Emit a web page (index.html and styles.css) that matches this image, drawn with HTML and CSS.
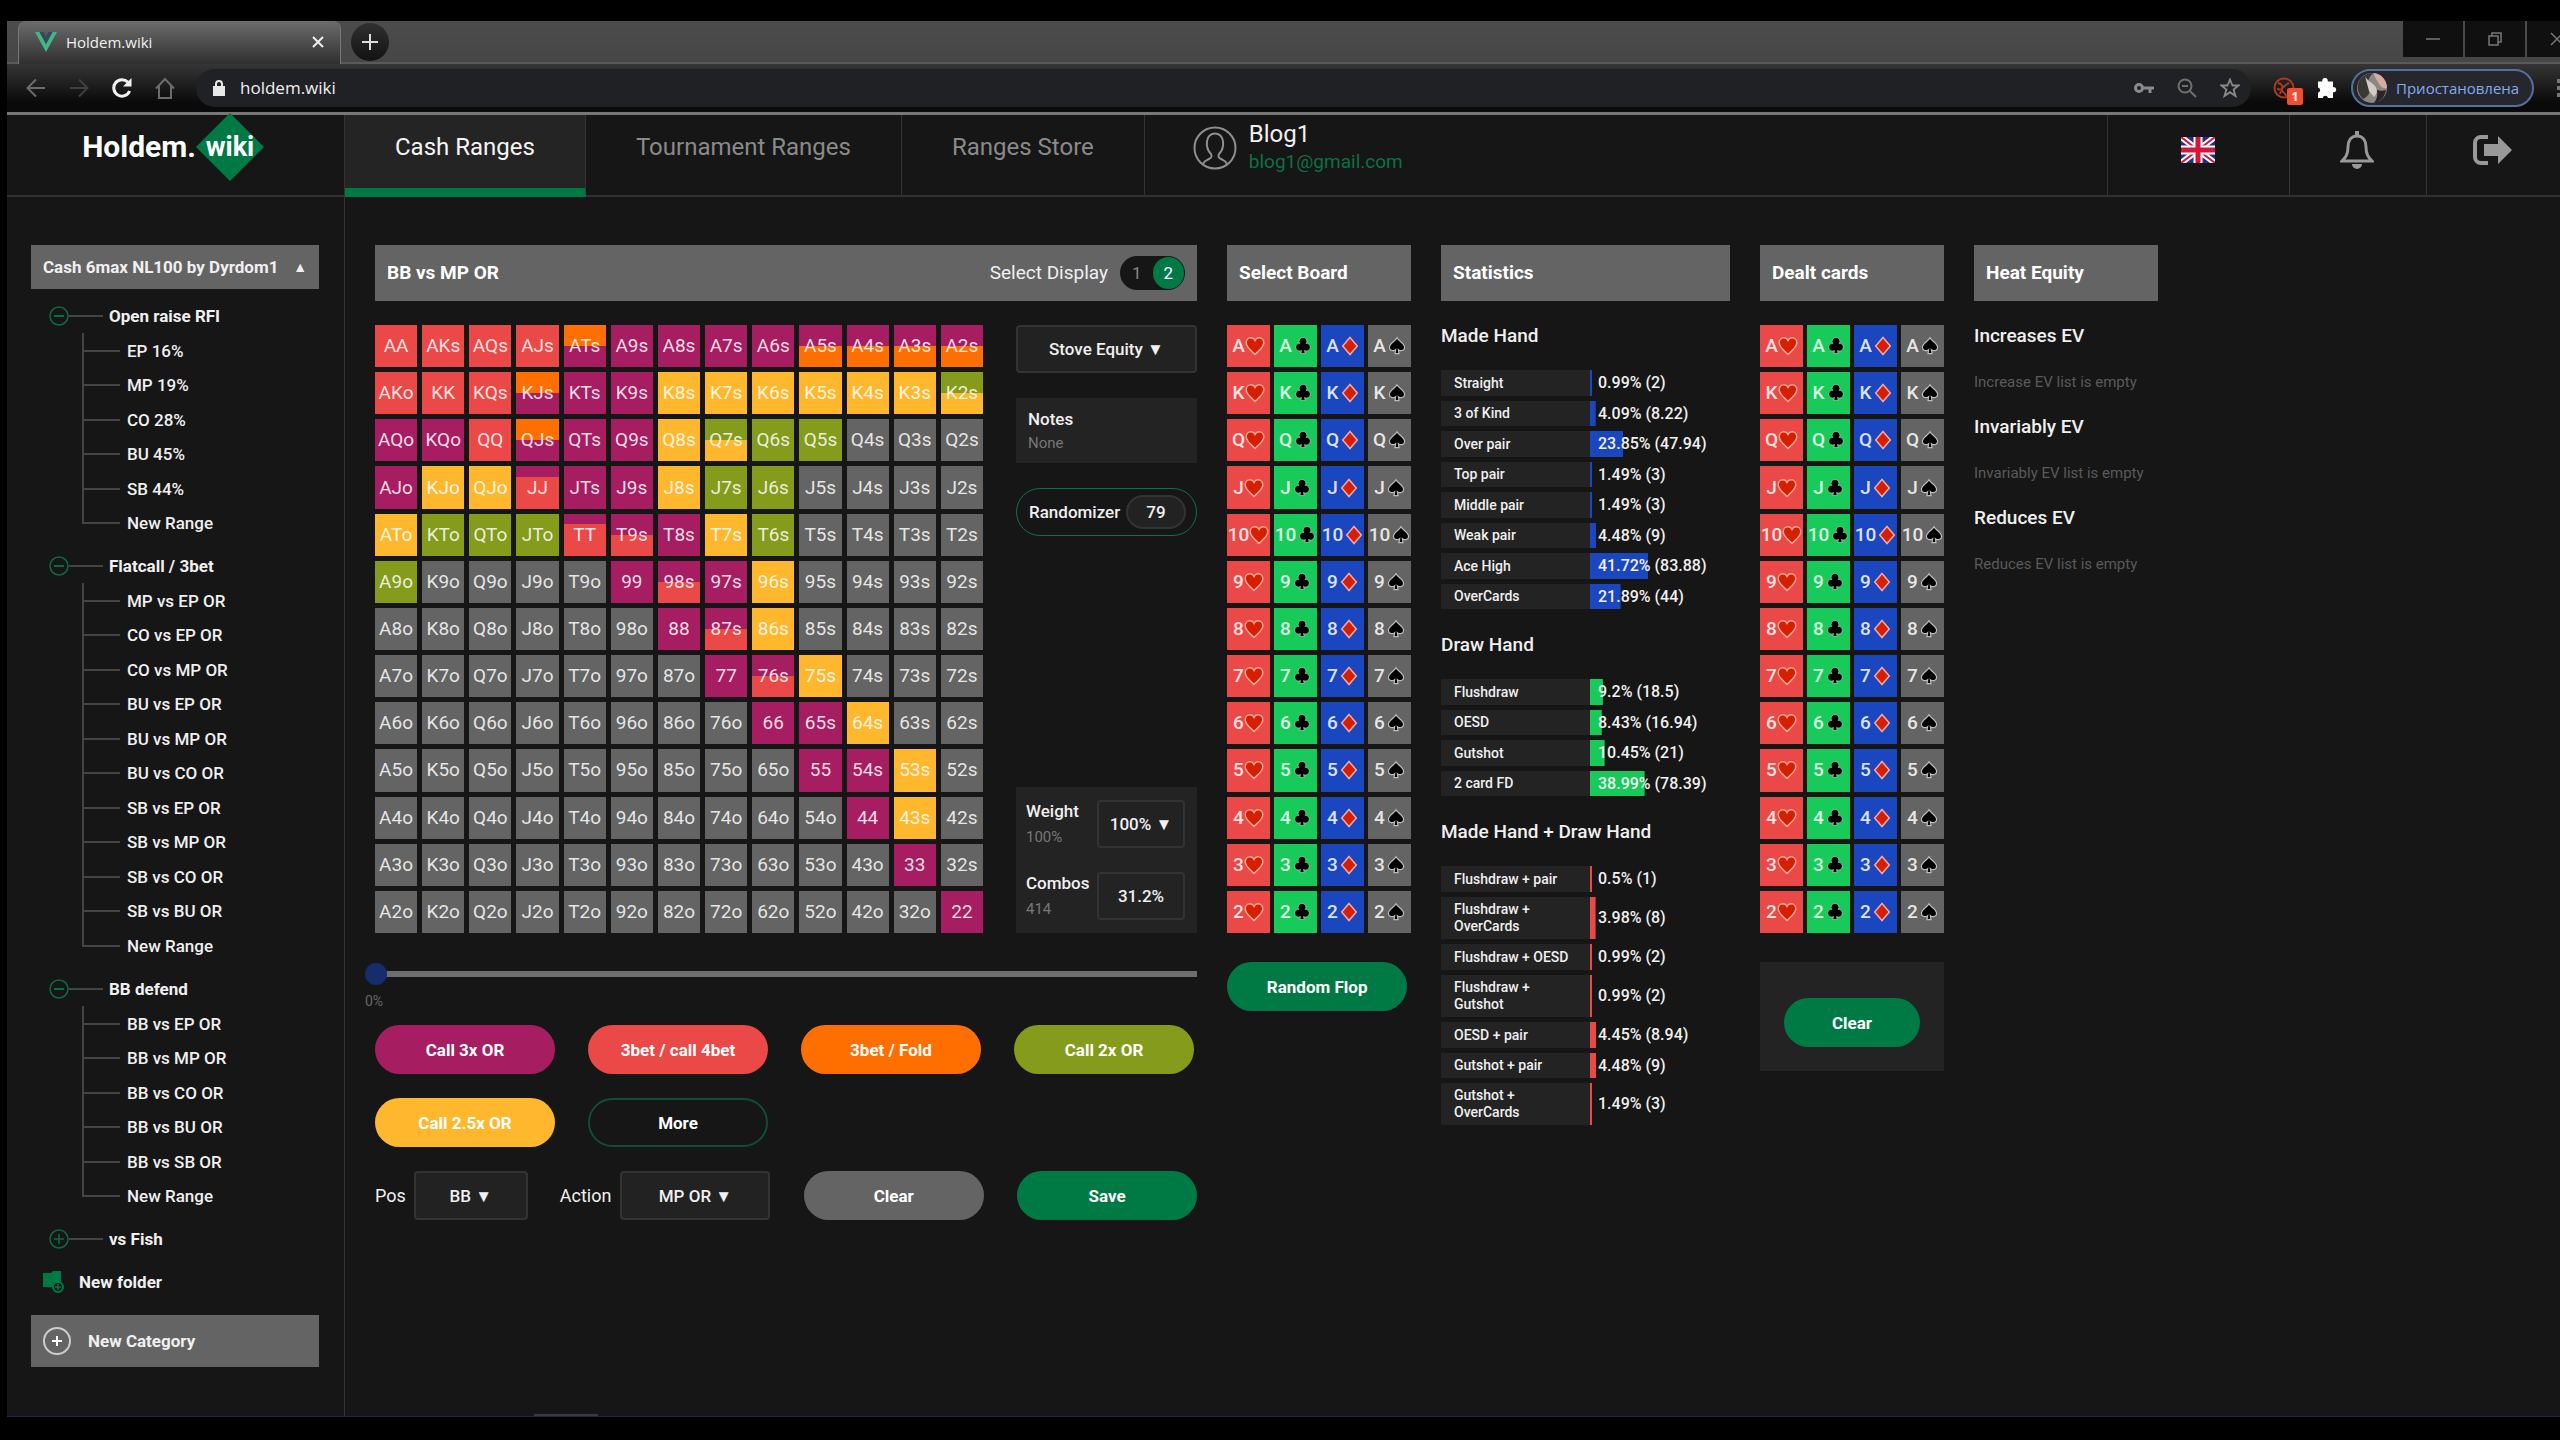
FILE: index.html
```html
<!DOCTYPE html>
<html lang="en">
<head>
<meta charset="utf-8">
<title>Holdem.wiki</title>
<link rel="stylesheet" href="styles.css">
</head>
<body>
<svg class="defs" aria-hidden="true">
  <symbol id="heart" viewBox="0 0 20 20"><path d="M10 18.4C7 15.4 1.2 11.600 1.200 6.800C1.200 3.800 3.400 1.800 5.800 1.800C7.800 1.800 9.200 2.900 10 4.500C10.800 2.900 12.200 1.800 14.200 1.800C16.600 1.800 18.800 3.800 18.800 6.800C18.800 11.600 13 15.400 10 18.400Z" fill="#d61f00" stroke="#ffa596" stroke-width="1.500"/></symbol>
  <symbol id="club" viewBox="0 0 20 20"><path d="M11 1.500a3.600 3.600 0 0 1 3 5.900a3.800 3.800 0 1 1-1.500 7l.6 3.100H8.900l.6-3.100a3.800 3.800 0 1 1-1.500-7a3.600 3.600 0 0 1 3-5.900Z" fill="#000" stroke="#ffffff70" stroke-width="1"/></symbol>
  <symbol id="diamond" viewBox="0 0 20 20"><path d="M11 1.500L18.300 10L11 18.500L3.700 10Z" fill="#d61f00" stroke="#f5a9a5" stroke-width="1.500"/></symbol>
  <symbol id="spade" viewBox="0 0 20 20"><path d="M11 1.800C12.600 5 18.600 7.600 18.600 11.400C18.600 14.600 14.600 15.600 12.400 13.700L13 17.600H9L9.600 13.700C7.400 15.600 3.400 14.600 3.400 11.400C3.400 7.600 9.400 5 11 1.800Z" fill="#000" stroke="#bdbdbd" stroke-width="1.200"/></symbol>
  <symbol id="minus" viewBox="0 0 20 20"><circle cx="10" cy="10" r="9" fill="none" stroke="currentColor" stroke-width="1.500"/><path d="M5 10h10" stroke="currentColor" stroke-width="2"/></symbol>
  <symbol id="plus" viewBox="0 0 20 20"><circle cx="10" cy="10" r="9" fill="none" stroke="currentColor" stroke-width="1.500"/><path d="M5 10h10M10 5v10" stroke="currentColor" stroke-width="1.500"/></symbol>
</svg>

<div class="window">
  <div class="tabstrip">
    <div class="tab">
      <svg width="22" height="20" viewBox="0 0 22 20"><path d="M0 0h4.500L11 12L17.500 0H22L11 20Z" fill="#41b883"/><path d="M4.500 0h4L11 4.500L13.500 0h4L11 12Z" fill="#35495e"/></svg>
      <span class="tab-title">Holdem.wiki</span>
      <button class="tab-close" aria-label="Close tab"><svg width="12" height="12" viewBox="0 0 12 12"><path d="M1 1l10 10M11 1L1 11" stroke="#eee" stroke-width="2"/></svg></button>
    </div>
    <button class="tab-new" aria-label="New tab"><svg width="16" height="16" viewBox="0 0 16 16"><path d="M8 0v16M0 8h16" stroke="#ddd" stroke-width="2"/></svg></button>
    <div class="win-buttons">
      <button aria-label="Minimize"><svg width="14" height="14" viewBox="0 0 14 14"><path d="M0 7h14" stroke="#777" stroke-width="1.500"/></svg></button>
      <button aria-label="Restore"><svg width="14" height="14" viewBox="0 0 14 14" fill="none" stroke="#777" stroke-width="1.500"><path d="M1 4h9v9H1ZM4 4V1h9v9h-3"/></svg></button>
      <button aria-label="Close"><svg width="14" height="14" viewBox="0 0 14 14"><path d="M1 1l12 12M13 1L1 13" stroke="#777" stroke-width="1.500"/></svg></button>
    </div>
  </div>
  <div class="toolbar">
    <div class="nav-buttons">
      <button aria-label="Back"><svg width="20" height="20" viewBox="0 0 20 20" fill="none" stroke="#6c6c6c" stroke-width="2"><path d="M19 10H2M10 1.500L1.500 10L10 18.500"/></svg></button>
      <button aria-label="Forward"><svg width="20" height="20" viewBox="0 0 20 20" fill="none" stroke="#404040" stroke-width="2"><path d="M1 10h17M10 1.500L18.500 10L10 18.500"/></svg></button>
      <button aria-label="Reload"><svg width="20" height="20" viewBox="0 0 20 20" fill="none" stroke="#f1f1f1" stroke-width="3"><path d="M17.600 13A8.200 8.200 0 1 1 16 4.300"/><path d="M19.500 0v8.500H11Z" fill="#f1f1f1" stroke="none"/></svg></button>
      <button aria-label="Home"><svg width="20" height="22" viewBox="0 0 20 22" fill="none" stroke="#6c6c6c" stroke-width="2"><path d="M1 11.500L10 2l9 9.500M4 9v12h12V9"/></svg></button>
    </div>
    <div class="address">
      <svg width="12" height="16" viewBox="0 0 12 16"><path d="M0 6h12v10H0Z" fill="#e8e8e8"/><path d="M3 7V4a3 3 0 0 1 6 0v3" fill="none" stroke="#e8e8e8" stroke-width="2"/></svg>
      <input class="address-input" type="text" aria-label="Address" value="holdem.wiki">
      <svg width="20" height="12" viewBox="0 0 20 12" fill="none" stroke="#8a8a8a"><circle cx="5" cy="6" r="3.500" stroke-width="3"/><path d="M9 6h11M16 6v5" stroke-width="3"/></svg>
      <svg width="20" height="20" viewBox="0 0 20 20" fill="none" stroke="#707070" stroke-width="2"><circle cx="8" cy="8" r="6.500"/><path d="M13 13l6 6M5 8h6"/></svg>
      <svg width="20" height="20" viewBox="0 0 20 20" fill="none" stroke="#8a8a8a" stroke-width="1.800"><path d="M10 1.500l2.500 6h6L13.600 11.500l1.900 6.500L10 14.200L4.500 18l1.900-6.500L1.500 7.500h6Z"/></svg>
    </div>
    <div class="extensions">
      <button class="blocker" aria-label="Blocker"><svg width="22" height="22" viewBox="0 0 22 22" fill="none" stroke="#a83a22" stroke-width="2"><circle cx="11" cy="11" r="9.500"/><path d="M5 6c4 1 5 3 4 6s3 3 4 7M7 17c1-6 5-9 9-11M4 12l6 1"/></svg><span class="badge">1</span></button>
      <button aria-label="Extensions"><svg width="20" height="20" viewBox="0 0 20 20"><path d="M8 0a2.600 2.600 0 0 1 2.600 3.500H16V9a2.700 2.700 0 1 1 0 5.300V20h-5a2.700 2.700 0 0 0-5.300 0H1v-5.300a2.700 2.700 0 0 0 0-5.300V3.500h4.400A2.600 2.600 0 0 1 8 0Z" fill="#fff"/></svg></button>
      <button class="profile">
        <svg width="30" height="30" viewBox="0 0 30 30"><circle cx="15" cy="15" r="15" fill="#8d8783"/><path d="M1 11C3 4 9 0 16 0c-5 5-6 10-4 15s-2 9-6 11C2 22 0 17 1 11Z" fill="#3b3735"/><path d="M8 3c2 5 7 6 10 10s2 8-1 11l-5-6Z" fill="#d2ccc7"/><path d="M17 0c8 1 13 8 13 15c-4 1-7-2-9-6S17 4 17 0Z" fill="#d9aba0"/><path d="M20 17c3 1 6 1 9 0c-1 7-6 12-12 13c3-4 4-8 3-13Z" fill="#292625"/></svg>
        <span>Приостановлена</span>
      </button>
      <button class="dots" aria-label="Menu"><svg width="4" height="18" viewBox="0 0 4 18"><path d="M0 0h4v4H0ZM0 7h4v4H0ZM0 14h4v4H0Z" fill="#777"/></svg></button>
    </div>
  </div>

  <header class="header">
    <a class="logo" href="#"><span>Holdem.</span><span class="logo-mark"><svg width="68" height="68" viewBox="0 0 68 68"><path d="M34 0L68 34L34 68L0 34Z" fill="#007a45"/></svg><span class="logo-wiki">wiki</span></span></a>
    <nav class="menu">
      <a class="active" href="#">Cash Ranges</a>
      <a href="#">Tournament Ranges</a>
      <a href="#">Ranges Store</a>
    </nav>
    <div class="user">
      <svg width="44" height="44" viewBox="0 0 44 44" fill="none" stroke="#8f8f8f" stroke-width="2"><circle cx="22" cy="22" r="20.500"/><path d="M10 38c1-3 3-3.500 6-5s3-3 2-5c-4-4-4.500-9-4-13c.5-4.500 4-7.500 8-7.500s7.500 3 8 7.500c.5 4 0 9-4 13c-1 2-1 3.500 2 5s5 2 6 5"/></svg>
      <div><div class="user-name">Blog1</div><a class="user-mail" href="#">blog1@gmail.com</a></div>
    </div>
    <button class="head-btn lang" aria-label="English"><svg width="34" height="26" viewBox="0 0 34 26"><path d="M0 0h34v26H0Z" fill="#23307c"/><path d="M0 0L34 26M34 0L0 26" stroke="#fff" stroke-width="6"/><path d="M0 0L34 26M34 0L0 26" stroke="#d5153a" stroke-width="2"/><path d="M17 0v26M0 13h34" stroke="#fff" stroke-width="9"/><path d="M17 0v26M0 13h34" stroke="#d5153a" stroke-width="5"/></svg></button>
    <button class="head-btn bell" aria-label="Notifications"><svg width="34" height="38" viewBox="0 0 34 38"><path d="M17 5c-6 0-9 5-9 11c0 7-2 10-6 14h30c-4-4-6-7-6-14c0-6-3-11-9-11Z" fill="none" stroke="#999" stroke-width="3"/><path d="M15 0h4v6h-4ZM12 33h10a5 5 0 0 1-10 0Z" fill="#999"/></svg></button>
    <button class="head-btn exit" aria-label="Log out"><svg width="40" height="30" viewBox="0 0 40 30"><path d="M15 2H8a6 6 0 0 0-6 6v14a6 6 0 0 0 6 6h7" fill="none" stroke="#999" stroke-width="4"/><path d="M11 9h14V1L39 15L25 29V21H11Z" fill="#999"/></svg></button>
  </header>

  <div class="body">
    <aside class="sidebar">
      <button class="category"><span>Cash 6max NL100 by Dyrdom1</span><span class="tri">▲</span></button>
      <div class="tree" id="tree"></div>
      <a class="new-folder" href="#"><svg width="22" height="22" viewBox="0 0 22 22"><path d="M0 2h8l2-2h8v16H0Z" fill="#007a45"/><circle cx="15" cy="16" r="5" fill="#161616" stroke="#007a45" stroke-width="2"/><path d="M12 16h6M15 13v6" stroke="#007a45" stroke-width="1.500"/></svg>New folder</a>
      <button class="new-category"><svg width="28" height="28" viewBox="0 0 28 28"><circle cx="14" cy="14" r="13" fill="none" stroke="#ccc" stroke-width="2"/><path d="M9 14h10M14 9v10" stroke="#fff" stroke-width="2"/></svg>New Category</button>
    </aside>

    <main class="main">
      <section>
        <div class="panel-head"><h2>BB vs MP OR</h2>
          <fieldset class="display"><legend class="hidden">Display</legend><span>Select Display</span>
            <span class="switch"><label><input type="radio" name="display">1</label><label><input type="radio" name="display" checked>2</label></span>
          </fieldset>
        </div>
        <div class="range">
          <div class="matrix" id="matrix"></div>
          <div class="side">
            <select class="select" aria-label="Mode"><option>Stove Equity ▼</option></select>
            <div class="notes"><strong>Notes</strong><span>None</span></div>
            <button class="randomizer"><span>Randomizer</span><span class="pill">79</span></button>
            <div class="weights">
              <label class="stack" for="weight"><strong>Weight</strong><span>100%</span></label>
              <select class="select" id="weight"><option>100% ▼</option></select>
              <div class="stack"><strong>Combos</strong><span>414</span></div>
              <div class="box">31.2%</div>
            </div>
          </div>
        </div>
        <div class="slider"><input type="range" id="pct" min="0" max="100" value="0"><label for="pct">0%</label></div>
        <div class="actions">
          <button class="btn plum">Call 3x OR</button>
          <button class="btn red">3bet / call 4bet</button>
          <button class="btn orange">3bet / Fold</button>
          <button class="btn olive">Call 2x OR</button>
          <button class="btn amber">Call 2.5x OR</button>
          <button class="btn outline">More</button>
        </div>
        <div class="save-row">
          <label for="pos">Pos</label><select class="select pos" id="pos"><option>BB ▼</option></select>
          <label class="act" for="act">Action</label><select class="select action" id="act"><option>MP OR ▼</option></select>
          <button class="btn grey">Clear</button>
          <button class="btn green">Save</button>
        </div>
      </section>

      <section>
        <div class="panel-head"><h2>Select Board</h2></div>
        <div class="deck"></div>
        <button class="btn green flop">Random Flop</button>
      </section>

      <section>
        <div class="panel-head"><h2>Statistics</h2></div>
        <div id="stats"></div>
      </section>

      <section>
        <div class="panel-head"><h2>Dealt cards</h2></div>
        <div class="deck"></div>
        <div class="dealt"><button class="btn green">Clear</button></div>
      </section>

      <section>
        <div class="panel-head"><h2>Heat Equity</h2></div>
        <div class="heat"><h3>Increases EV</h3><p>Increase EV list is empty</p></div>
        <div class="heat"><h3>Invariably EV</h3><p>Invariably EV list is empty</p></div>
        <div class="heat"><h3>Reduces EV</h3><p>Reduces EV list is empty</p></div>
      </section>
    </main>
  </div>
</div>
<script src="app.js"></script>
</body>
</html>
```
FILE: styles.css
```css
* { box-sizing: border-box; }
body { margin: 0; padding: 21px 0 23px 7px; min-height: 100vh; display: flex; background: #000; color: #f0f0f0; font: 500 17px/20px Roboto, sans-serif; overflow-x: hidden; }
button, select, input { font: inherit; color: inherit; margin: 0; }
button { border: 0; padding: 0; background: none; cursor: pointer; }
svg { display: block; flex: none; }
a { color: inherit; text-decoration: none; }
h2, h3, p { margin: 0; }
.defs { position: absolute; width: 0; height: 0; }
.hidden { display: none; }
.window { flex: 1; min-width: 0; display: flex; flex-direction: column; background: #161616; }

/* browser chrome */
.tabstrip { display: flex; align-items: center; height: 43px; padding-left: 11px; background: linear-gradient(#4c4c4c, #464646); border-bottom: 2px solid #5a5a5a; font: 400 15px/20px "Open Sans", sans-serif; }
.tab { display: flex; align-items: center; align-self: stretch; width: 323px; padding: 0 16px 2px; gap: 9px; margin-bottom: -2px; background: linear-gradient(#6c6c6c, #2f2f2f); border: 1px solid #777; border-width: 0 1px; border-radius: 8px 8px 0 0; }
.tab-title { flex: 1; }
.tab-new { display: grid; place-items: center; width: 38px; height: 38px; margin-left: 10px; border-radius: 50%; background: linear-gradient(#303030, #121212); }
.win-buttons { display: flex; align-self: flex-start; width: 157px; margin-left: auto; height: 36px; overflow: hidden; gap: 2px; }
.win-buttons button { display: grid; place-items: center; flex: 0 0 60px; background: #101010; }
.toolbar { display: flex; align-items: center; height: 51px; background: linear-gradient(#353535, #0a0a0a 80%); border-bottom: 3px solid #777; }
.nav-buttons { display: flex; gap: 23px; width: 189px; padding-left: 19px; align-items: center; }
.address { flex: 1; min-width: 0; display: flex; align-items: center; gap: 23px; height: 38px; padding: 0 11px 0 17px; border-radius: 19px; background: #202124; }
.address-input { flex: 1; min-width: 0; margin-left: -8px; padding: 0; border: 0; outline: 0; background: none; font: 400 17px/20px "Open Sans", sans-serif; }
.extensions { display: flex; align-items: center; width: 309px; padding-left: 22px; }
.extensions button { flex: none; }
.blocker { position: relative; width: 44px; }
.badge { position: absolute; left: 14px; top: 11px; width: 16px; height: 17px; border-radius: 2px; background: #f04e30; color: #fff; font: 700 12px/17px "Open Sans", sans-serif; }
.profile { display: flex; align-items: center; gap: 9px; width: 183px; height: 38px; margin-left: 14px; padding: 0 4px; border: 2px solid #55709c; border-radius: 19px; background: #25272c; color: #86a9ee; font: 400 15px/20px "Open Sans", sans-serif; }
.extensions .dots { margin-left: 23px; }

/* site header */
.header { display: flex; height: 82px; border-bottom: 2px solid #303030; }
.logo { display: flex; align-items: center; justify-content: flex-end; width: 338px; padding: 0 80px 16px 0; border-right: 1px solid #333; font: 700 30px/32px Roboto, sans-serif; color: #fff; }
.logo-mark { display: grid; place-items: center; }
.logo-mark > * { grid-area: 1 / 1; }
.logo-wiki { z-index: 1; font-size: 27px; }
.menu { display: flex; font: 400 24px/28px Roboto, sans-serif; color: #8a8a8a; }
.menu a { display: flex; align-items: center; padding: 0 50px 16px; border-right: 1px solid #333; }
.menu .active { margin-bottom: -2px; padding-top: 7px; border-bottom: 9px solid #007a45; background: #242424; color: #f5f5f5; }
.user { flex: 1; display: flex; align-items: center; gap: 12px; padding: 0 48px 14px; font: 400 24px/28px Roboto, sans-serif; }
.user-mail { display: block; font-size: 19px; color: #0b7144; }
.head-btn { display: grid; place-items: center; padding: 0 2px 10px 0; border-left: 1px solid #333; }
.lang { width: 182px; }
.bell { width: 137px; }
.exit { width: 134px; }

/* sidebar */
.body { flex: 1; display: flex; border-bottom: 1px solid #20264a; }
.sidebar { flex: none; width: 338px; padding: 48px 25px 0 24px; border-right: 1px solid #333; }
.category { display: flex; justify-content: space-between; align-items: center; width: 100%; height: 44px; padding: 0 12px; background: #646464; font-weight: 700; }
.tri { font-size: 14px; }
.tree { padding: 10px 0 0 18px; }
.node { display: flex; align-items: center; height: 34px; font-weight: 700; }
.node svg { color: #0b6b42; }
.node::after { content: ""; order: 1; width: 34px; height: 2px; background: #444; }
.node span { order: 2; padding-left: 6px; }
.leaves { margin: 0 0 9px 33px; padding: 0; list-style: none; }
.leaves li { display: flex; align-items: center; height: 35px; background: linear-gradient(#444, #444) 0 0 / 2px 100% no-repeat; }
.leaves li:nth-child(even) { height: 34px; }
.leaves li:last-child { background-size: 2px 50%; }
.leaves li::before { content: ""; width: 38px; height: 2px; margin-right: 7px; background: #444; }
.new-folder { display: flex; align-items: center; gap: 14px; margin: 9px 0 16px 12px; height: 34px; font-weight: 700; }
.new-category { display: flex; align-items: center; gap: 17px; width: 100%; height: 52px; padding: 0 12px; background: #646464; font-weight: 700; }

/* panels */
.main { flex: 1; min-width: 0; display: grid; grid-template-columns: 822fr 184fr 289fr 184fr 184fr 342fr; gap: 30px; align-items: start; padding: 48px 30px 0; background: linear-gradient(#3a3a3a, #3a3a3a) 189px 100% / 64px 2px no-repeat; }
.main section { min-width: 0; }
.panel-head { display: flex; align-items: center; justify-content: space-between; height: 56px; padding: 0 12px; margin-bottom: 24px; background: #646464; }
h2 { font: 700 19px/24px Roboto, sans-serif; color: #fff; white-space: nowrap; }
h3 { margin-top: -1px; font: 500 19px/24px Roboto, sans-serif; }
.display { display: flex; align-items: center; gap: 12px; margin: 0; padding: 0; border: 0; font: 400 19px/24px Roboto, sans-serif; }
.switch { display: flex; width: 65px; height: 34px; padding: 1px; border-radius: 17px; background: #161616; font-size: 17px; }
.switch label { flex: 1; display: grid; place-items: center; border-radius: 16px; color: #888; }
.switch label:has(:checked) { background: #007a45; color: #fff; }
.switch input { position: absolute; opacity: 0; }
.range { display: grid; grid-template-columns: 608fr 181fr; gap: 33px; }
.matrix { display: grid; grid-template-columns: repeat(13, 1fr); grid-template-rows: repeat(13, 1fr); gap: 5px; aspect-ratio: 1; }
.cell { min-width: 0; color: #ffffffd9; font: 400 19px/24px Roboto, sans-serif; white-space: nowrap; display: flex; align-items: center; justify-content: center; }
.side { display: flex; flex-direction: column; gap: 25px; min-width: 0; }
.select { appearance: none; height: 48px; width: 100%; padding: 0 8px; border: 2px solid #333; border-radius: 4px; background: #222; text-align: center; text-align-last: center; }
.notes { display: flex; flex-direction: column; justify-content: center; gap: 4px; height: 65px; padding: 0 12px; background: #232323; }
strong { font-weight: 500; }
.notes span, .stack span { font-size: 15px; color: #777; font-weight: 400; }
.randomizer { display: flex; align-items: center; justify-content: space-between; height: 48px; padding: 0 10px 0 12px; border: 1px solid #107048; border-radius: 24px; }
.pill { width: 60px; height: 34px; border: 2px solid #333; border-radius: 17px; background: #222; line-height: 30px; }
.weights { display: grid; grid-template-columns: 1fr 88px; gap: 24px 4px; align-items: center; margin-top: auto; height: 146px; padding: 0 12px 0 10px; align-content: center; background: #232323; }
.weights .select, .box { height: 48px; }
.stack { display: flex; flex-direction: column; gap: 6px; min-width: 0; }
.box { display: grid; place-items: center; border: 2px solid #333; border-radius: 4px; }
.slider { display: flex; flex-direction: column; margin: 30px 0 14px -10px; }
.slider input { appearance: none; width: 100%; height: 22px; margin: 0; background: linear-gradient(#6e6e6e, #6e6e6e) 10px 50% / 100% 6px no-repeat; }
.slider input::-webkit-slider-thumb { appearance: none; width: 22px; height: 22px; border-radius: 50%; background: #162c6c; }
.slider label { padding-top: 6px; font-size: 14px; font-weight: 400; color: #666; }
.actions { display: grid; grid-template-columns: repeat(4, 180fr); gap: 24px 33px; padding-right: 3px; }
.btn { height: 49px; min-width: 0; border-radius: 25px; font-weight: 700; color: #fff; }
.plum { background: #a61d62; }
.red { background: #ea4947; }
.orange { background: #ff6f00; }
.olive { background: #849b1b; }
.amber { background: #ffb82e; }
.outline { border: 2px solid #114d34; }
.grey { background: #646464; }
.green { background: #007a45; }
.save-row { display: flex; align-items: center; margin-top: 24px; font-weight: 400; }
.save-row label { font-size: 18px; }
.save-row .select { height: 49px; font-weight: 500; }
.save-row .pos { width: 114px; margin-left: 8px; }
.save-row .act { margin-left: 32px; }
.save-row .action { width: 150px; margin-left: 9px; }
.save-row .btn { width: 180px; margin-left: auto; }
.deck { display: grid; grid-template-columns: repeat(4, 1fr); grid-template-rows: repeat(13, 1fr); gap: 5px 4px; height: 608px; margin-bottom: 29px; }
.card { display: flex; align-items: center; justify-content: center; min-width: 0; overflow: hidden; color: #ffffffd9; font: 500 19px/24px Roboto, sans-serif; }
.card svg { width: 20px; height: 20px; }
.heart { background: #ea4947; }
.club { background: #18ca5a; }
.diamond { background: #1a46bf; }
.spade { background: #646464; }
.flop { width: 98%; }
.dealt { display: grid; padding: 36px 24px 24px; background: #232323; }
.stat-group { margin-bottom: 25px; }
.stat-group h3 { height: 46px; }
.stat { display: grid; grid-template-columns: 149fr 140fr; margin: 0 0 5px; min-height: 26px; }
.stat:nth-child(odd) { min-height: 25px; }
.stat dt { display: flex; align-items: center; padding: 4px 12px 4px 13px; background: #232323; font-size: 14px; line-height: 17px; }
.stat dd { display: flex; align-items: center; margin: 0; padding-left: 8px; background-repeat: no-repeat; font: 500 16px/20px Roboto, sans-serif; }
.heat { height: 92px; }
.heat p { padding-top: 24px; font: 400 15px/20px Roboto, sans-serif; color: #5a5a5a; white-space: nowrap; }
```
FILE: app.js
```js
const ranks = ["A", "K", "Q", "J", "T", "9", "8", "7", "6", "5", "4", "3", "2"];
const colors = { p: "#a61d62", r: "#ea4947", o: "#ff6f00", g: "#849b1b", y: "#ffb82e", ".": "#646464" };

// one letter fills the cell; "ab50" puts a over b, split at 50%
const rows = [
  "r r r r op50 p p p p po50 po50 po50 po50",
  "r r r op50 p p y y y y y y gy50",
  "p p r op50 p p y gy50 g g . . .",
  "p y y pr25 p p y g g . . . .",
  "y g g g pr25 pr50 p y g . . . .",
  "g . . . . p pr50 p y . . . .",
  ". . . . . . p pr50 y . . . .",
  ". . . . . . . p pr50 y . . .",
  ". . . . . . . . p p y . .",
  ". . . . . . . . . p p y .",
  ". . . . . . . . . . p y .",
  ". . . . . . . . . . . p .",
  ". . . . . . . . . . . . p"
];

document.getElementById("matrix").innerHTML = rows.map((row, i) => row.split(" ").map((code, j) => {
  const name = i === j ? ranks[i] + ranks[i] : i < j ? ranks[i] + ranks[j] + "s" : ranks[j] + ranks[i] + "o";
  const stop = code.slice(2) + "%";
  const bg = code.length === 1 ? colors[code] : `linear-gradient(${colors[code[0]]} ${stop}, ${colors[code[1]]} ${stop})`;
  return `<button class="cell" style="background:${bg}">${name}</button>`;
}).join("")).join("");

const deck = ranks.map(r => ["heart", "club", "diamond", "spade"].map(s =>
  `<button class="card ${s}">${r === "T" ? "10" : r}<svg><use href="#${s}"/></svg></button>`).join("")).join("");
document.querySelectorAll(".deck").forEach(el => { el.innerHTML = deck; });

const tree = [
  ["Open raise RFI", ["EP 16%", "MP 19%", "CO 28%", "BU 45%", "SB 44%", "New Range"]],
  ["Flatcall / 3bet", ["MP vs EP OR", "CO vs EP OR", "CO vs MP OR", "BU vs EP OR", "BU vs MP OR", "BU vs CO OR", "SB vs EP OR", "SB vs MP OR", "SB vs CO OR", "SB vs BU OR", "New Range"]],
  ["BB defend", ["BB vs EP OR", "BB vs MP OR", "BB vs CO OR", "BB vs BU OR", "BB vs SB OR", "New Range"]],
  ["vs Fish", []]
];
document.getElementById("tree").innerHTML = tree.map(([name, leaves]) =>
  `<div class="node"><svg width="20" height="20"><use href="#${leaves.length ? "minus" : "plus"}"/></svg><span>${name}</span></div>` +
  (leaves.length ? `<ul class="leaves">${leaves.map(l => `<li><a href="#">${l}</a></li>`).join("")}</ul>` : "")).join("");

const stats = [
  ["Made Hand", "#1a46bf", [["Straight", 0.99, 2], ["3 of Kind", 4.09, 8.22], ["Over pair", 23.85, 47.94], ["Top pair", 1.49, 3], ["Middle pair", 1.49, 3], ["Weak pair", 4.48, 9], ["Ace High", 41.72, 83.88], ["OverCards", 21.89, 44]]],
  ["Draw Hand", "#18ca5a", [["Flushdraw", 9.2, 18.5], ["OESD", 8.43, 16.94], ["Gutshot", 10.45, 21], ["2 card FD", 38.99, 78.39]]],
  ["Made Hand + Draw Hand", "#ea4947", [["Flushdraw + pair", 0.5, 1], ["Flushdraw + OverCards", 3.98, 8], ["Flushdraw + OESD", 0.99, 2], ["Flushdraw + Gutshot", 0.99, 2], ["OESD + pair", 4.45, 8.94], ["Gutshot + pair", 4.48, 9], ["Gutshot + OverCards", 1.49, 3]]]
];
document.getElementById("stats").innerHTML = stats.map(([title, color, list]) =>
  `<div class="stat-group"><h3>${title}</h3>${list.map(([name, pct, n]) =>
    `<dl class="stat"><dt>${name}</dt><dd style="background-image:linear-gradient(${color},${color});background-size:max(${pct}%, 2px) 100%">${pct}% (${n})</dd></dl>`).join("")}</div>`).join("");
```
